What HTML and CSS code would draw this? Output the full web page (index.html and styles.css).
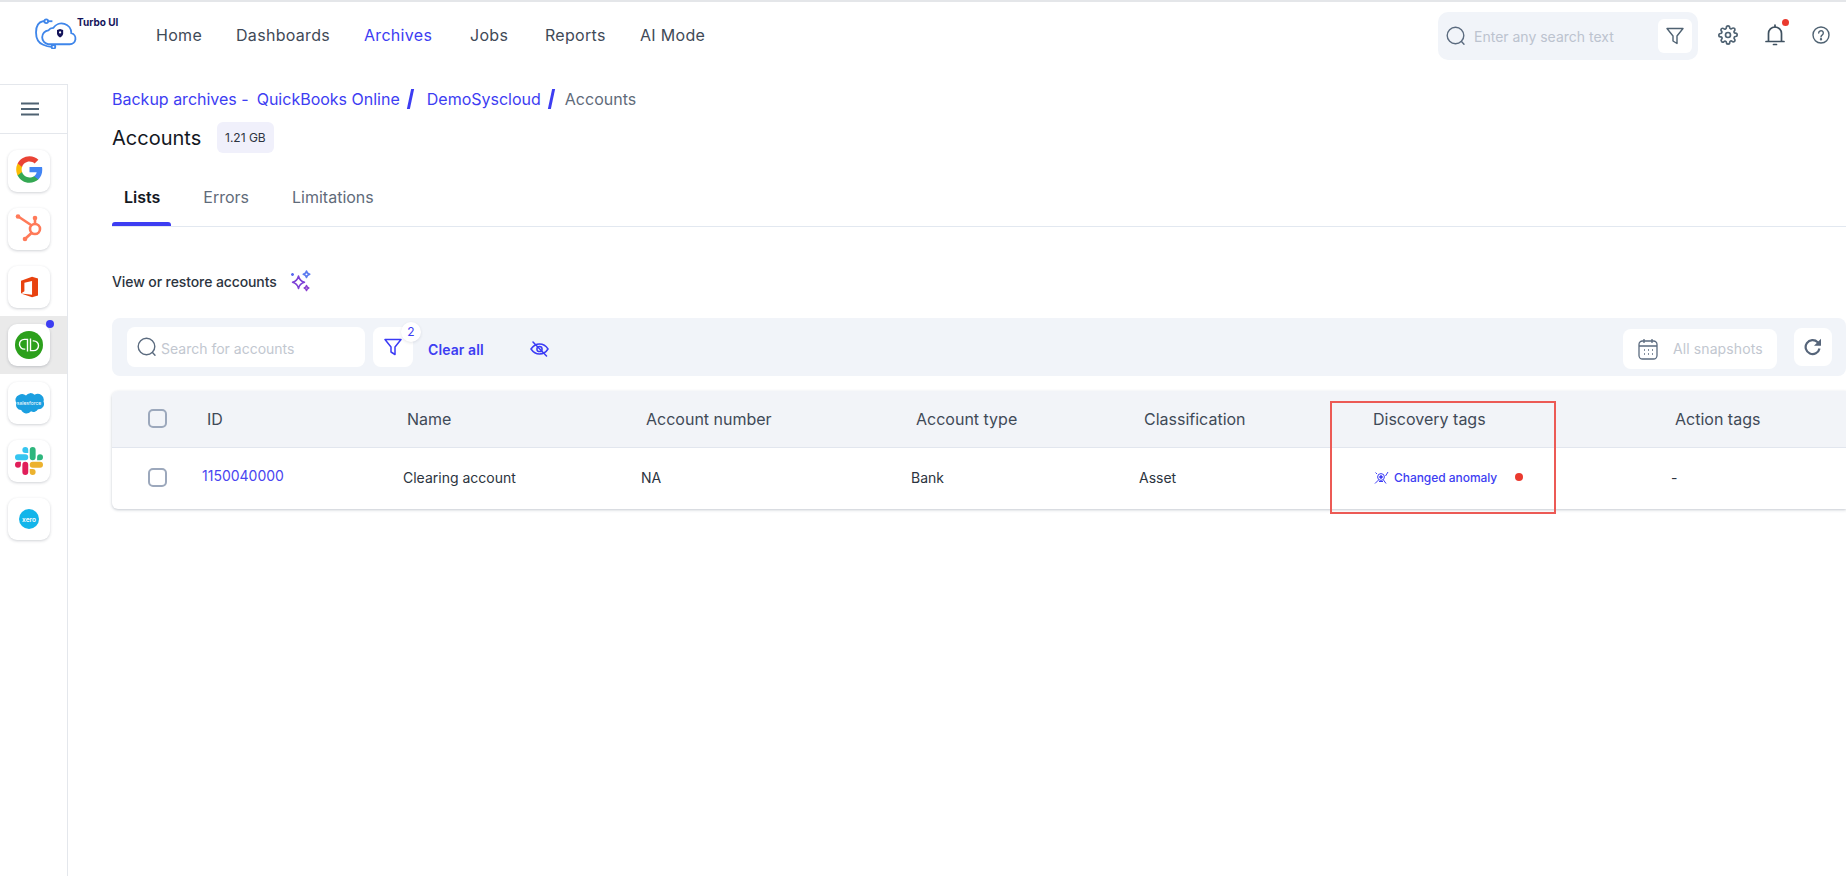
FILE: index.html
```html
<!DOCTYPE html>
<html lang="en">
<head>
    <meta charset="UTF-8">
    <title>Accounts</title>
    <link rel="stylesheet" href="styles.css">
</head>
<body>
    <!-- Top bar -->
    <header class="topbar">
        <div class="logo">
            <svg class="logo-mark" viewBox="0 0 42 30" fill="none" stroke="#3f86ea" stroke-width="1.8">
                <path d="M13 25.500h21a5.500 5.500 0 0 0 1.500-10.800A9.500 9.500 0 0 0 18 9.500a6 6 0 0 0-5 2.500 6.800 6.800 0 0 0 0 13.500z"/>
                <path d="M10 3H8C3 4 1 9 1 14s2 10 7 12c2 1 5 2 8 2"/>
                <path d="M10 3h7"/>
                <circle cx="11" cy="3" r="1.800" fill="#fff"/>
                <circle cx="18" cy="28" r="1.800" fill="#fff"/>
                <path d="M21.500 11.500l3-1 3 1v3.500c0 1.800-1.300 3-3 4-1.700-1-3-2.200-3-4z" fill="#14145a" stroke="none"/>
                <circle cx="24.500" cy="14" r="1.100" fill="#fff" stroke="none"/>
            </svg>
            <span class="logo-name">Turbo UI</span>
        </div>
        <nav class="main-nav">
            <a class="nav-home">Home</a>
            <a class="nav-dash">Dashboards</a>
            <a class="nav-arch active">Archives</a>
            <a class="nav-jobs">Jobs</a>
            <a class="nav-reports">Reports</a>
            <a>AI Mode</a>
        </nav>
        <div class="top-search">
            <svg class="search-icon" viewBox="0 0 20 20" fill="none" stroke="#5b6b7f" stroke-width="1.400">
                <circle cx="9.500" cy="9.500" r="8.300"/>
                <path d="M15.500 15.500l2.500 2.700" stroke-linecap="round"/>
            </svg>
            <span class="top-placeholder">Enter any search text</span>
            <span class="top-filter">
                <svg width="18" height="18" viewBox="0 0 18 18" fill="none" stroke="#4f6272" stroke-width="1.400" stroke-linejoin="round">
                    <path d="M1 1.500h16L11 9v7.500l-4-2.500V9z"/>
                </svg>
            </span>
        </div>
        <div class="top-icons">
            <svg width="20" height="20" viewBox="0 0 24 24" fill="none" stroke="#4f6272" stroke-width="2" stroke-linejoin="round">
                <circle cx="12" cy="12" r="3"/>
                <path d="M19.400 15a1.650 1.650 0 0 0 .33 1.820l.06.06a2 2 0 1 1-2.830 2.830l-.06-.06a1.650 1.650 0 0 0-2.800 1.170V21a2 2 0 0 1-4 0v-.09a1.650 1.650 0 0 0-2.800-1.120l-.06.06a2 2 0 1 1-2.830-2.830l.06-.06a1.650 1.650 0 0 0-1.170-2.800H3a2 2 0 0 1 0-4h.09a1.650 1.650 0 0 0 1.120-2.800l-.06-.06a2 2 0 1 1 2.830-2.830l.06.06a1.650 1.650 0 0 0 1.820.33H9a1.650 1.650 0 0 0 1-1.510V3a2 2 0 0 1 4 0v.09a1.650 1.650 0 0 0 2.800 1.120l.06-.06a2 2 0 1 1 2.830 2.830l-.06.06a1.650 1.650 0 0 0 1.170 2.800H21a2 2 0 0 1 0 4h-.09a1.650 1.650 0 0 0-1.510 1z"/>
            </svg>
            <span class="bell">
                <svg width="20" height="22" viewBox="0 0 20 22" fill="none" stroke="#3f5160" stroke-width="1.700" stroke-linecap="round">
                    <path d="M3.500 17V9.500a6.500 6.500 0 0 1 13 0V17"/>
                    <path d="M1 17.500h18"/>
                    <path d="M10 1v2"/>
                    <path d="M8.500 20.500h3"/>
                </svg>
                <span class="bell-dot"></span>
            </span>
            <svg width="18" height="18" viewBox="0 0 18 18" fill="none" stroke="#4f6272" stroke-width="1.400">
                <circle cx="9" cy="9" r="8"/>
                <path d="M6.700 7a2.300 2.300 0 1 1 3.600 1.900c-.8.500-1.300 1-1.300 2" stroke-linecap="round"/>
                <circle cx="9" cy="13.300" r=".5" fill="#4f6272"/>
            </svg>
        </div>
    </header>

    <div class="layout">
        <!-- Left app rail -->
        <aside class="rail">
            <div class="rail-burger">
                <svg width="18" height="14" viewBox="0 0 18 14" stroke="#4f6272" stroke-width="1.800">
                    <path d="M0 1.500h18M0 7h18M0 12.500h18"/>
                </svg>
            </div>
            <div class="rail-apps">
                <div class="rail-slot">
                    <span class="app-box">
                        <svg class="icon-google" width="29" height="29" viewBox="0 0 24 24">
                            <path fill="#4285F4" d="M22.560 12.250c0-.78-.07-1.530-.2-2.250H12v4.260h5.920c-.26 1.370-1.040 2.530-2.210 3.310v2.770h3.570c2.080-1.920 3.280-4.740 3.280-8.090z"/>
                            <path fill="#34A853" d="M12 23c2.970 0 5.460-.98 7.280-2.660l-3.570-2.770c-.98.660-2.230 1.060-3.710 1.060-2.860 0-5.290-1.930-6.160-4.530H2.180v2.840C3.990 20.530 7.700 23 12 23z"/>
                            <path fill="#FBBC05" d="M5.840 14.090c-.22-.66-.35-1.360-.35-2.090s.13-1.430.35-2.090V7.070H2.180C1.430 8.550 1 10.220 1 12s.43 3.450 1.180 4.930l2.850-2.220.81-.62z"/>
                            <path fill="#EA4335" d="M12 5.380c1.620 0 3.060.56 4.210 1.640l3.150-3.150C17.450 2.090 14.970 1 12 1 7.700 1 3.990 3.470 2.180 7.070l3.660 2.840c.87-2.600 3.300-4.530 6.160-4.530z"/>
                        </svg>
                    </span>
                </div>
                <div class="rail-slot">
                    <span class="app-box">
                        <svg width="28" height="30" viewBox="0 0 28 30" fill="none" stroke="#ff7a59" stroke-width="2.600" stroke-linecap="round">
                            <circle cx="20" cy="15" r="5"/>
                            <path d="M16 11L4 3"/>
                            <path d="M20 9V5"/>
                            <path d="M16.500 19L10.500 24.500"/>
                            <circle cx="3" cy="2.500" r="2.300" fill="#ff7a59" stroke="none"/>
                            <circle cx="20" cy="4" r="2.300" fill="#ff7a59" stroke="none"/>
                            <circle cx="10" cy="25" r="2.300" fill="#ff7a59" stroke="none"/>
                        </svg>
                    </span>
                </div>
                <div class="rail-slot">
                    <span class="app-box">
                        <svg width="17" height="22" viewBox="0 0 20 24">
                            <path fill="#e8420f" d="M0 4.500L13 0l7 2v20l-7 2-13-4.500L13 21V5L4 7v10l-4 2.500z"/>
                        </svg>
                    </span>
                </div>
                <div class="rail-slot active">
                    <span class="app-box">
                        <svg width="28" height="28" viewBox="0 0 30 30" fill="none" stroke="#fff" stroke-width="1.500">
                            <circle cx="15" cy="15" r="15" fill="#2ca01c" stroke="none"/>
                            <path d="M13.400 22V9H10a5.200 5.200 0 0 0 0 10.400h1"/>
                            <path d="M16.600 8v13H20a5.200 5.200 0 0 0 0-10.400h-1"/>
                        </svg>
                    </span>
                    <span class="app-dot"></span>
                </div>
                <div class="rail-slot">
                    <span class="app-box">
                        <svg width="30" height="22" viewBox="0 0 30 22">
                            <path fill="#1b9fe0" d="M12 3.500A5.500 5.500 0 0 1 20.500 2.800 6 6 0 0 1 29.500 9.500a5.500 5.500 0 0 1-5.500 7.800 5 5 0 0 1-7 2 5.800 5.800 0 0 1-9.800-1.300A5 5 0 0 1 2.500 11 5.200 5.200 0 0 1 5 3a5.800 5.800 0 0 1 7 .5z"/>
                            <text class="sf-text" x="15" y="12.500" text-anchor="middle">salesforce</text>
                        </svg>
                    </span>
                </div>
                <div class="rail-slot">
                    <span class="app-box">
                        <svg width="28" height="28" viewBox="0 0 24 24">
                            <path fill="#E01E5A" d="M5.042 15.165a2.528 2.528 0 0 1-2.520 2.523A2.528 2.528 0 0 1 0 15.165a2.527 2.527 0 0 1 2.522-2.520h2.520v2.520zM6.313 15.165a2.527 2.527 0 0 1 2.521-2.520 2.527 2.527 0 0 1 2.521 2.520v6.313A2.528 2.528 0 0 1 8.834 24a2.528 2.528 0 0 1-2.521-2.522v-6.313z"/>
                            <path fill="#36C5F0" d="M8.834 5.042a2.528 2.528 0 0 1-2.521-2.520A2.528 2.528 0 0 1 8.834 0a2.528 2.528 0 0 1 2.521 2.522v2.520H8.834zM8.834 6.313a2.528 2.528 0 0 1 2.521 2.521 2.528 2.528 0 0 1-2.521 2.521H2.522A2.528 2.528 0 0 1 0 8.834a2.528 2.528 0 0 1 2.522-2.521h6.312z"/>
                            <path fill="#2EB67D" d="M18.956 8.834a2.528 2.528 0 0 1 2.522-2.521A2.528 2.528 0 0 1 24 8.834a2.528 2.528 0 0 1-2.522 2.521h-2.522V8.834zM17.688 8.834a2.528 2.528 0 0 1-2.523 2.521 2.527 2.527 0 0 1-2.520-2.521V2.522A2.527 2.527 0 0 1 15.165 0a2.528 2.528 0 0 1 2.523 2.522v6.312z"/>
                            <path fill="#ECB22E" d="M15.165 18.956a2.528 2.528 0 0 1 2.523 2.522A2.528 2.528 0 0 1 15.165 24a2.527 2.527 0 0 1-2.520-2.522v-2.522h2.520zM15.165 17.688a2.527 2.527 0 0 1-2.520-2.523 2.526 2.526 0 0 1 2.520-2.520h6.313A2.527 2.527 0 0 1 24 15.165a2.528 2.528 0 0 1-2.522 2.523h-6.313z"/>
                        </svg>
                    </span>
                </div>
                <div class="rail-slot">
                    <span class="app-box">
                        <svg width="20" height="20" viewBox="0 0 20 20">
                            <circle cx="10" cy="10" r="10" fill="#13b5ea"/>
                            <text class="xero-text" x="10" y="12.500" text-anchor="middle">xero</text>
                        </svg>
                    </span>
                </div>
            </div>
        </aside>

        <!-- Page content -->
        <main class="content">
            <div class="crumbs">
                <a>Backup archives -</a>
                <a class="crumb-qb">QuickBooks Online</a>
                <span class="crumb-sep"></span>
                <a class="crumb-demo">DemoSyscloud</a>
                <span class="crumb-sep"></span>
                <span class="crumb-last">Accounts</span>
            </div>
            <div class="title-row">
                <h1>Accounts</h1>
                <span class="size-badge">1.21 GB</span>
            </div>
            <ul class="tabs">
                <li class="selected">Lists</li>
                <li>Errors</li>
                <li>Limitations</li>
            </ul>
            <div class="section-label">
                <span>View or restore accounts</span>
                <svg width="22" height="22" viewBox="0 0 22 22" fill="none" stroke-width="1.500" stroke-linejoin="round">
                    <path stroke="#7c3fd6" d="M8.500 6c.9 3.800 2.400 5.400 6 6.300-3.600.9-5.100 2.400-6 6.200-.9-3.800-2.400-5.300-6-6.200 3.600-.9 5.100-2.500 6-6.300z"/>
                    <path stroke="#5c7cf0" d="M16.500 1c.4 2 1.100 2.800 3.300 3.300-2.200.5-2.900 1.300-3.300 3.300-.4-2-1.100-2.800-3.300-3.300 2.200-.5 2.900-1.300 3.300-3.300z"/>
                    <path stroke="#8a3fd0" d="M16.500 15.500c.3 1.500.9 2.100 2.300 2.500-1.400.4-2 1-2.300 2.500-.3-1.500-.9-2.100-2.300-2.500 1.400-.4 2-1 2.300-2.500z"/>
                    <path stroke="#5c6cf0" d="M2.500 3v3M1 4.500h3"/>
                </svg>
            </div>

            <div class="toolbar">
                <div class="tb-search">
                    <svg class="search-icon" viewBox="0 0 20 20" fill="none" stroke="#5b6b7f" stroke-width="1.400">
                        <circle cx="9.500" cy="9.500" r="8.300"/>
                        <path d="M15.500 15.500l2.500 2.700" stroke-linecap="round"/>
                    </svg>
                    <span class="tb-search-text">Search for accounts</span>
                </div>
                <div class="tb-filter">
                    <svg width="18" height="18" viewBox="0 0 18 18" fill="none" stroke="#3b3bf5" stroke-width="1.500" stroke-linejoin="round">
                        <path d="M1 1.500h16L11 9v7.500l-4-2.500V9z"/>
                    </svg>
                    <span class="filter-count">2</span>
                </div>
                <a class="clear-all">Clear all</a>
                <svg class="eye-off" width="19" height="16" viewBox="0 0 19 16" fill="none" stroke="#3b3bf5" stroke-width="1.500" stroke-linecap="round">
                    <path d="M1 8c2.200-3.200 5-5 8.500-5S16 4.800 18 8c-2 3.200-4.800 5-8.500 5S3.200 11.200 1 8z"/>
                    <circle cx="9.500" cy="8" r="2.600"/>
                    <path d="M3 1l13.500 14"/>
                </svg>
                <div class="tb-snapshots">
                    <svg width="20" height="22" viewBox="0 0 20 22" fill="none" stroke="#5b6b7f" stroke-width="1.300">
                        <rect x="1" y="3" width="18" height="18" rx="3.500"/>
                        <path d="M1 8h18M6 1v4M14 1v4"/>
                        <path d="M6 12h1M10 12h1M14 12h1M6 16h1M10 16h1M14 16h1" stroke-width="1.400"/>
                    </svg>
                    <span>All snapshots</span>
                </div>
                <div class="tb-refresh">
                    <svg width="18" height="18" viewBox="0 0 18 18" fill="none" stroke="#56657a" stroke-width="2.200">
                        <path d="M15.500 10.500a7 7 0 1 1-1.800-6.300L16 6.500"/>
                        <path d="M17 .8v7h-7z" fill="#56657a" stroke="none"/>
                    </svg>
                </div>
            </div>

            <div class="grid-table">
                <div class="grid-row grid-head">
                    <div class="cell-check"><span class="check"></span></div>
                    <div>ID</div>
                    <div>Name</div>
                    <div>Account number</div>
                    <div>Account type</div>
                    <div>Classification</div>
                    <div>Discovery tags</div>
                    <div>Action tags</div>
                </div>
                <div class="grid-row grid-body">
                    <div class="cell-check"><span class="check"></span></div>
                    <div class="cell-id">1150040000</div>
                    <div>Clearing account</div>
                    <div class="cell-na">NA</div>
                    <div>Bank</div>
                    <div>Asset</div>
                    <div class="tag">
                        <svg width="15" height="14" viewBox="0 0 15 14" fill="none" stroke="#3b3bf5" stroke-width="1">
                            <circle cx="7" cy="6" r="3.400"/>
                            <circle cx="7" cy="6" r="1.300" fill="#3b3bf5"/>
                            <path d="M4.500 9L1 12.500M9.500 9l2.500 3.500M11.500 5L14 1M3 3L1.500 1.500M5 10.500h4"/>
                        </svg>
                        <span>Changed anomaly</span>
                        <i class="tag-dot"></i>
                    </div>
                    <div>-</div>
                </div>
                <div class="highlight-box"></div>
            </div>
        </main>
    </div>
</body>
</html>
```

FILE: styles.css
```css
/* Basic reset */
* {
    margin: 0;
    padding: 0;
    box-sizing: border-box;
}

html, body {
    height: 100%;
    overflow: hidden;
}

body {
    background-color: #fff;
    font-family: Inter, 'Noto Sans', sans-serif;
    color: #3a4553;
    border-top: 2px solid #e4e6e9;
    display: flex;
    flex-direction: column;
}

/* Top bar */
.topbar {
    height: 82px;
    flex-shrink: 0;
    display: flex;
    align-items: flex-start;
    padding-left: 35px;
}

.logo {
    display: flex;
    align-items: flex-start;
    width: 121px;
    padding-top: 16px;
}

.logo-mark {
    width: 43px;
    height: 31px;
}

.logo-name {
    font-size: 10px;
    font-weight: 700;
    color: #14145a;
    margin-top: -2px;
    margin-left: -1px;
}

.main-nav {
    display: flex;
    padding-top: 24px;
    font-size: 16px;
    line-height: 18px;
    letter-spacing: .3px;
    color: #3f4a57;
}

.main-nav a {
    display: block;
}

.main-nav .active {
    color: #3d3df2;
}

.nav-home { width: 80px; }
.nav-dash { width: 128px; }
.nav-arch { width: 106px; }
.nav-jobs { width: 75px; }
.nav-reports { width: 95px; }

.top-search {
    margin-left: auto;
    margin-top: 10px;
    width: 260px;
    height: 48px;
    background-color: #f1f4f9;
    border-radius: 10px;
    display: flex;
    align-items: center;
    padding-left: 8px;
    font-size: 14px;
    color: #bcc3cf;
}

.search-icon {
    width: 20px;
    height: 20px;
    flex-shrink: 0;
}

.top-placeholder {
    margin-left: 8px;
}

.top-filter {
    width: 34px;
    height: 34px;
    margin-left: auto;
    margin-right: 6px;
    background-color: #fff;
    border-radius: 6px;
    display: flex;
    align-items: center;
    justify-content: center;
}

.top-icons {
    display: flex;
    align-items: center;
    gap: 27px;
    height: 48px;
    margin-top: 9px;
    margin-left: 20px;
    margin-right: 16px;
}

.bell {
    display: block;
    height: 22px;
    position: relative;
}

.bell-dot {
    position: absolute;
    top: -5px;
    right: -4px;
    width: 7px;
    height: 7px;
    background-color: #ea3a2f;
    border-radius: 50%;
}

/* Left rail */
.layout {
    flex: 1;
    display: flex;
    min-height: 0;
}

.rail {
    width: 68px;
    flex-shrink: 0;
    border-right: 1px solid #e4e7ec;
    border-top: 1px solid #e4e7ec;
}

.rail-burger {
    height: 49px;
    border-bottom: 1px solid #e4e7ec;
    display: flex;
    align-items: center;
    justify-content: center;
    padding-right: 7px;
}

.rail-apps {
    padding-top: 8px;
}

.rail-slot {
    height: 58px;
    display: flex;
    align-items: center;
    padding-left: 8px;
    position: relative;
}

.rail-slot.active {
    background-color: #eaeaea;
}

.app-box {
    width: 42px;
    height: 42px;
    background-color: #fff;
    border-radius: 9px;
    box-shadow: 0 1px 3px rgba(40, 50, 70, .22);
    display: flex;
    align-items: center;
    justify-content: center;
}

.icon-google {
    margin-top: -3px;
}

.app-dot {
    position: absolute;
    top: 4px;
    left: 46px;
    width: 8px;
    height: 8px;
    background-color: #3d3df2;
    border-radius: 50%;
}

.sf-text {
    font-family: Inter, sans-serif;
    font-size: 5px;
    fill: #fff;
}

.xero-text {
    font-family: Inter, sans-serif;
    font-size: 6.500px;
    font-weight: 600;
    fill: #fff;
}

/* Main area */
.content {
    flex: 1;
    min-width: 0;
    padding-left: 44px;
}

.crumbs {
    display: flex;
    align-items: center;
    height: 30px;
    font-size: 16px;
    color: #3d3df2;
}

.crumb-qb {
    margin-left: 8px;
}

.crumb-sep {
    width: 3px;
    height: 20px;
    margin: 0 10px 0 9px;
    background-color: #3d3df2;
    transform: skewX(-12deg);
}

.crumb-demo {
    margin-left: 5px;
}

.crumb-last {
    margin-left: 2px;
    color: #5f6b7a;
}

.title-row {
    display: flex;
    align-items: center;
    margin-top: 8px;
    height: 31px;
}

h1 {
    font-size: 20px;
    font-weight: 400;
    color: #14181f;
    width: 105px;
}

.size-badge {
    height: 31px;
    padding: 0 8px;
    font-size: 12px;
    line-height: 31px;
    color: #2d3440;
    background-color: #f0f0fb;
    border-radius: 6px;
}

.tabs {
    list-style-type: none;
    display: flex;
    height: 74px;
    border-bottom: 1px solid #e2e8f0;
    font-size: 16px;
    color: #5f6b7a;
    padding-top: 32px;
}

.tabs li {
    height: 41px;
    line-height: 24px;
    padding: 0 12px;
    margin-right: 19px;
    position: relative;
}

.tabs li.selected {
    color: #14181f;
    font-weight: 600;
    padding-right: 11px;
    margin-right: 20px;
}

.tabs li.selected::after {
    content: '';
    position: absolute;
    left: 0;
    right: 0;
    bottom: 0;
    height: 4px;
    background-color: #3d3df2;
    border-radius: 3px 3px 0 0;
}

.section-label {
    display: flex;
    align-items: center;
    gap: 13px;
    height: 24px;
    margin-top: 42px;
    font-size: 14px;
    font-weight: 500;
    letter-spacing: -.1px;
    color: #2c3440;
}

/* Toolbar */
.toolbar {
    display: flex;
    align-items: center;
    height: 58px;
    margin-top: 25px;
    padding-left: 15px;
    background-color: #f1f4f9;
    border-radius: 8px;
    font-size: 14px;
}

.tb-search {
    width: 238px;
    height: 40px;
    padding-left: 10px;
    display: flex;
    align-items: center;
    gap: 4px;
    background-color: #fff;
    border-radius: 8px;
    color: #c2c7d0;
}

.tb-search-text {
    margin-top: 2px;
}

.tb-filter {
    width: 40px;
    height: 40px;
    margin-left: 8px;
    background-color: #fff;
    border-radius: 8px;
    display: flex;
    align-items: center;
    justify-content: center;
    position: relative;
}

.filter-count {
    position: absolute;
    top: -5px;
    right: -8px;
    width: 20px;
    height: 20px;
    background-color: #fff;
    border-radius: 50%;
    box-shadow: 0 1px 3px rgba(40, 50, 70, .12);
    font-size: 12px;
    line-height: 20px;
    text-align: center;
    color: #3d3df2;
}

.clear-all {
    margin-left: 15px;
    margin-top: 4px;
    font-weight: 600;
    letter-spacing: .1px;
    color: #3d3df2;
}

.eye-off {
    margin-left: 46px;
    margin-top: 4px;
}

.tb-snapshots {
    margin-left: auto;
    margin-top: 3px;
    width: 154px;
    height: 40px;
    padding-left: 15px;
    display: flex;
    align-items: center;
    gap: 15px;
    background-color: #fff;
    border-radius: 8px;
    letter-spacing: .1px;
    color: #c2c7d0;
}

.tb-refresh {
    width: 38px;
    height: 38px;
    margin: 0 14px 0 17px;
    background-color: #fff;
    border-radius: 8px;
    display: flex;
    align-items: center;
    justify-content: center;
}

/* Accounts table */
.grid-table {
    margin-top: 15px;
    border-radius: 6px 0 0 6px;
    box-shadow: 0 1px 3px rgba(60, 75, 100, .3);
    position: relative;
}

.grid-row {
    display: grid;
    grid-template-columns: 90px 201px 238px 270px 228px 234px 298px 1fr;
    align-items: center;
}

.grid-head {
    height: 57px;
    padding-bottom: 1px;
    background-color: #f2f4f8;
    border-bottom: 1px solid #e2e6ee;
    border-radius: 6px 0 0 0;
    font-size: 16px;
    color: #3f4a57;
}

.grid-head div {
    padding-left: 5px;
}

.grid-head .cell-check,
.grid-body .cell-check {
    padding-left: 36px;
    display: flex;
}

.grid-head div:nth-child(3) {
    padding-left: 4px;
}

.grid-head div:nth-child(7) {
    padding-left: 0;
}

.grid-head div:nth-child(8) {
    padding-left: 4px;
}

.grid-body {
    height: 61px;
    padding-bottom: 2px;
    font-size: 14px;
    color: #2c3440;
}

.check {
    width: 19px;
    height: 19px;
    background-color: #fff;
    border: 2px solid #9ca8bc;
    border-radius: 5px;
}

.grid-head .check {
    background-color: transparent;
}

.cell-id {
    color: #4a45f0;
    margin-top: -4px;
}

.tag {
    display: flex;
    align-items: center;
    padding-left: 1px;
    font-size: 12px;
    font-weight: 500;
    letter-spacing: -.05px;
    color: #3d3df2;
}

.tag span {
    margin-left: 5px;
}

.tag-dot {
    width: 8px;
    height: 8px;
    margin-left: 18px;
    margin-top: -2px;
    background-color: #ea3a2f;
    border-radius: 50%;
}

/* Red annotation drawn over the table */
.highlight-box {
    position: absolute;
    left: 1218px;
    top: 10px;
    width: 226px;
    height: 113px;
    border: 2px solid #ec5a55;
}
```
